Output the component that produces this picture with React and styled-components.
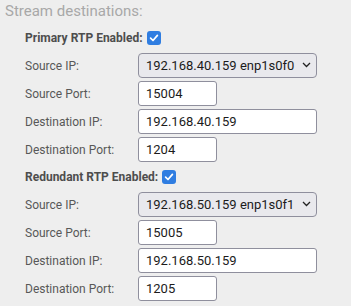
import React from "react";
import styled, { createGlobalStyle } from "styled-components";

const GlobalStyle = createGlobalStyle`
  body {
    margin: 0;
    background: #eeeeee;
    font-family: Roboto, "Liberation Sans", sans-serif;
  }
`;

const Page = styled.div`
  padding: 0 0 8px 0;
`;

const Title = styled.h2`
  margin: 0;
  padding: 2px 0 0 5px;
  font-size: 15px;
  line-height: 18px;
  font-weight: 400;
  color: #a8a8a8;
`;

const Section = styled.div`
  padding-left: 25px;
  margin-top: ${(p) => (p.first ? "8px" : "5px")};
`;

const Header = styled.label`
  display: flex;
  align-items: center;
  height: 20px;
  font-size: 12px;
  font-weight: 700;
  color: #4d4d4d;
`;

const Check = styled.span`
  display: inline-flex;
  align-items: center;
  justify-content: center;
  width: 14px;
  height: 14px;
  margin-left: 4px;
  border-radius: 3px;
  background: #2f7de1;
`;

const Rows = styled.div`
  display: grid;
  grid-template-columns: 113px auto;
  row-gap: 3px;
  margin-top: 5px;
`;

const Label = styled.span`
  display: flex;
  align-items: center;
  height: 25px;
  font-size: 12px;
  color: #585858;
`;

const Field = styled.input`
  box-sizing: border-box;
  width: ${(p) => (p.wide ? "179px" : "79px")};
  height: 25px;
  padding: 0 7px;
  border: 1px solid #8f8f9d;
  border-radius: 3px;
  background: #ffffff;
  font-family: Roboto, "Liberation Sans", sans-serif;
  font-size: 13px;
  color: #1b1b1b;
  outline: none;
`;

const SelectWrap = styled.div`
  position: relative;
  width: 179px;
  height: 25px;
`;

const Select = styled.select`
  appearance: none;
  box-sizing: border-box;
  width: 100%;
  height: 25px;
  padding: 0 20px 0 7px;
  border: 1px solid #8f8f9d;
  border-radius: 4px;
  background: #e9e9ed;
  font-family: Roboto, "Liberation Sans", sans-serif;
  font-size: 13px;
  color: #1b1b1b;
  outline: none;
`;

const Chevron = styled.svg`
  position: absolute;
  right: 6px;
  top: 9px;
  pointer-events: none;
`;

function CheckMark() {
  return (
    <Check>
      <svg width="10" height="10" viewBox="0 0 10 10">
        <path d="M1.6 5.2 L4 7.5 L8.4 2.4" fill="none" stroke="#fff" strokeWidth="1.7" strokeLinecap="round" strokeLinejoin="round" />
      </svg>
    </Check>
  );
}

function Destination({ title, iface, srcPort, dstIp, dstPort, first }) {
  return (
    <Section first={first}>
      <Header>
        {title}
        <CheckMark />
      </Header>
      <Rows>
        <Label>Source IP:</Label>
        <SelectWrap>
          <Select defaultValue={iface}>
            <option>{iface}</option>
          </Select>
          <Chevron width="9" height="6" viewBox="0 0 9 6">
            <path d="M1 1 L4.5 4.5 L8 1" fill="none" stroke="#222" strokeWidth="1.3" />
          </Chevron>
        </SelectWrap>
        <Label>Source Port:</Label>
        <div><Field defaultValue={srcPort} /></div>
        <Label>Destination IP:</Label>
        <div><Field wide defaultValue={dstIp} /></div>
        <Label>Destination Port:</Label>
        <div><Field defaultValue={dstPort} /></div>
      </Rows>
    </Section>
  );
}

export default function App() {
  return (
    <Page>
      <GlobalStyle />
      <Title>Stream destinations:</Title>
      <Destination
        first
        title="Primary RTP Enabled:"
        iface="192.168.40.159 enp1s0f0"
        srcPort="15004"
        dstIp="192.168.40.159"
        dstPort="1204"
      />
      <Destination
        title="Redundant RTP Enabled:"
        iface="192.168.50.159 enp1s0f1"
        srcPort="15005"
        dstIp="192.168.50.159"
        dstPort="1205"
      />
    </Page>
  );
}
